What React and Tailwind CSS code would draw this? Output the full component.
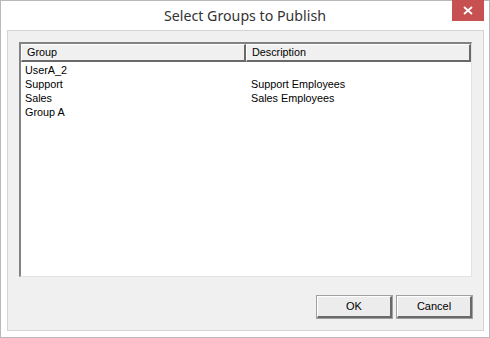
import React from "react";

const groups = [
  { name: "UserA_2", description: "" },
  { name: "Support", description: "Support Employees" },
  { name: "Sales", description: "Sales Employees" },
  { name: "Group A", description: "" },
];

function HeaderCell({ children, className = "" }) {
  return (
    <div
      className={`flex h-[18px] items-center border-t border-l border-b-2 border-r-2 border-t-white border-l-white border-b-[#696969] border-r-[#696969] bg-[#f0f0f0] pl-[5px] ${className}`}
    >
      {children}
    </div>
  );
}

function Button({ children }) {
  return (
    <button
      type="button"
      className="flex h-[22px] w-[75px] items-center justify-center border-t border-l border-b-2 border-r-2 border-t-white border-l-white border-b-[#696969] border-r-[#696969] bg-[#ececec] text-[11px] text-black outline outline-1 outline-[#a0a0a0]"
    >
      {children}
    </button>
  );
}

export default function App() {
  return (
    <div className="flex h-[338px] w-[490px] flex-col border border-[#b9b9b9] bg-white font-['Liberation_Sans',Arial,sans-serif]">
      {/* title bar */}
      <div className="relative flex h-[29px] shrink-0 items-center justify-center">
        <span className="font-['Noto_Sans',sans-serif] text-[14.2px] text-[#333333]">
          Select Groups to Publish
        </span>
        <div className="absolute right-[5px] top-[-1px] flex h-[21px] w-[32px] items-center justify-center bg-[#c75050]">
          <svg width="10" height="9" viewBox="0 0 10 9">
            <path d="M1 1 L9 8 M9 1 L1 8" stroke="white" strokeWidth="1.8" />
          </svg>
        </div>
      </div>

      {/* client area */}
      <div className="ml-[6px] flex h-[301px] w-[477px] flex-col border border-[#d4d4d4] bg-[#f0f0f0] p-[11px]">
        <div className="flex h-[235px] flex-col border-t-2 border-l-2 border-b border-r border-t-[#828282] border-l-[#828282] border-b-[#e3e3e3] border-r-[#e3e3e3] bg-white text-[10.8px] text-black">
          <div className="flex">
            <HeaderCell className="w-[225px]">Group</HeaderCell>
            <HeaderCell className="flex-1">Description</HeaderCell>
          </div>
          <div className="flex flex-col pt-[1px]">
            {groups.map((g) => (
              <div key={g.name} className="flex h-[14px] items-center leading-[14px]">
                <span className="w-[225px] pl-[4px]">{g.name}</span>
                <span className="pl-[5px]">{g.description}</span>
              </div>
            ))}
          </div>
        </div>

        <div className="mt-auto flex justify-end gap-[5px] pb-[1px]">
          <Button>OK</Button>
          <Button>Cancel</Button>
        </div>
      </div>
    </div>
  );
}
